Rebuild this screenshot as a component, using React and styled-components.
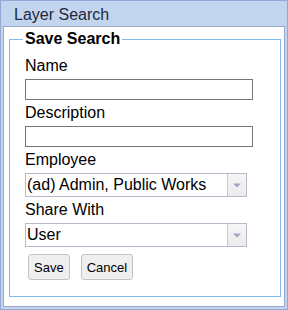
import React from "react";
import styled, { createGlobalStyle } from "styled-components";

const GlobalStyle = createGlobalStyle`
  body {
    margin: 0;
    font-family: "Liberation Sans", Arial, sans-serif;
  }
`;

const StyledWindow = styled.div`
  width: 288px;
  height: 310px;
  box-sizing: border-box;
  border: 1px solid #93a7d2;
  background: #c2d4ee;
  padding: 0 2px 2px;
  display: flex;
  flex-direction: column;
`;

const StyledHeader = styled.div`
  height: 25px;
  box-sizing: border-box;
  padding: 5px 0 0 11px;
  font-size: 16px;
  line-height: 18px;
  color: #1f2a3a;
`;

const StyledPanel = styled.div`
  flex: 1;
  background: #ffffff;
  border: 1px solid #97a6c9;
  display: flex;
  flex-direction: column;
`;

const StyledFieldset = styled.fieldset`
  margin: 3px 3px 9px 5px;
  padding: 5px 15px 16px;
  border: 1px solid #80b9ef;
  min-width: 0;
`;

const StyledLegend = styled.legend`
  margin-left: -2px;
  padding: 0 2px;
  font-size: 16px;
  line-height: 18px;
  font-weight: bold;
  color: #000;
`;

const StyledLabel = styled.label`
  display: block;
  margin: 4px 0;
  font-size: 16px;
  line-height: 18px;
  color: #000;
`;

const StyledInput = styled.input`
  display: block;
  width: 228px;
  height: 21px;
  box-sizing: border-box;
  margin: 0;
  padding: 0 2px;
  border: 1px solid #767676;
  font-family: "Liberation Sans", Arial, sans-serif;
  font-size: 14px;
`;

const StyledCombo = styled.div`
  display: flex;
  width: 222px;
  height: 24px;
  box-sizing: border-box;
  border: 1px solid #b6b9c8;
  background: #fff;
`;

const StyledComboValue = styled.div`
  flex: 1;
  padding-left: 1px;
  font-size: 16px;
  line-height: 22px;
  color: #000;
  white-space: nowrap;
  overflow: hidden;
`;

const StyledComboButton = styled.div`
  width: 18px;
  border-left: 1px solid #c4c6d2;
  background: linear-gradient(#f6f6f6, #ebebeb);
  display: flex;
  align-items: center;
  justify-content: center;
`;

const StyledButtonRow = styled.div`
  display: flex;
  gap: 11px;
  margin: 7px 0 0 3px;
`;

const StyledButton = styled.button`
  height: 26px;
  margin: 0;
  padding: 0 5px;
  border: 1px solid #c3c3c3;
  border-radius: 3px;
  background: #efefef;
  font-family: "Liberation Sans", Arial, sans-serif;
  font-size: 13px;
  color: #000;
`;

function Arrow() {
  return (
    <svg width="8" height="5" viewBox="0 0 8 5">
      <path d="M0 0.5 H8 L4 4.5 Z" fill="#9ea6c6" />
    </svg>
  );
}

function Combo({ value }) {
  return (
    <StyledCombo>
      <StyledComboValue>{value}</StyledComboValue>
      <StyledComboButton>
        <Arrow />
      </StyledComboButton>
    </StyledCombo>
  );
}

export default function App() {
  return (
    <>
      <GlobalStyle />
      <StyledWindow>
        <StyledHeader>Layer Search</StyledHeader>
        <StyledPanel>
          <StyledFieldset>
            <StyledLegend>Save Search</StyledLegend>
            <StyledLabel>Name</StyledLabel>
            <StyledInput />
            <StyledLabel>Description</StyledLabel>
            <StyledInput />
            <StyledLabel>Employee</StyledLabel>
            <Combo value="(ad) Admin, Public Works" />
            <StyledLabel>Share With</StyledLabel>
            <Combo value="User" />
            <StyledButtonRow>
              <StyledButton>Save</StyledButton>
              <StyledButton>Cancel</StyledButton>
            </StyledButtonRow>
          </StyledFieldset>
        </StyledPanel>
      </StyledWindow>
    </>
  );
}
